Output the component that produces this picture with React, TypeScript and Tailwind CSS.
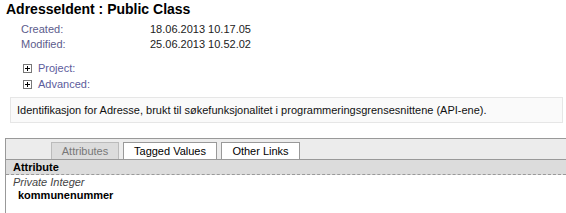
import React from 'react';

const PlusBox = () => (
  <span className="inline-flex items-center justify-center w-[9px] h-[9px] border border-[#777] bg-white mr-[6px]">
    <svg width="7" height="7" viewBox="0 0 7 7">
      <path d="M1 3.5h5M3.5 1v5" stroke="#000" strokeWidth="1" shapeRendering="crispEdges" />
    </svg>
  </span>
);

const tabs = [
  { label: 'Attributes', active: true, w: 'w-[68px]' },
  { label: 'Tagged Values', active: false, w: 'w-[94px]' },
  { label: 'Other Links', active: false, w: 'w-[79px]' },
];

const App: React.FC = () => {
  return (
    <div className="w-[566px] h-[213px] bg-white overflow-hidden font-['Liberation_Sans',Arial,sans-serif] text-[#222]">
      <h1 className="pl-[6px] pt-[1px] text-[14px] font-bold leading-[17px] text-black">AdresseIdent : Public Class</h1>

      <div className="pl-[21px] pt-[4px] text-[11px] leading-[15px]">
        <div className="flex">
          <span className="w-[129px] text-[#5c5c8c]">Created:</span>
          <span>18.06.2013 10.17.05</span>
        </div>
        <div className="flex">
          <span className="w-[129px] text-[#5c5c8c]">Modified:</span>
          <span>25.06.2013 10.52.02</span>
        </div>
      </div>

      <div className="pl-[23px] pt-[8px] text-[11px] leading-[16px] text-[#5c5c9c]">
        <div className="flex items-center"><PlusBox />Project:</div>
        <div className="flex items-center"><PlusBox />Advanced:</div>
      </div>

      <div className="ml-[10px] mr-[3px] mt-[5px] h-[26px] border border-[#e6e6e6] bg-[#fafafa] pl-[6px] text-[11px] leading-[24px] text-[#111]">
        Identifikasjon for Adresse, brukt til søkefunksjonalitet i programmeringsgrensesnittene (API-ene).
      </div>

      <div className="ml-[5px] mt-[15px] border-l border-t border-[#999]">
        <div className="h-[21px] bg-[#ececec] border-b border-[#999] flex items-end pl-[45px] gap-[4px]">
          {tabs.map(t => (
            <div
              key={t.label}
              className={`h-[17px] ${t.w} text-center border border-b-0 text-[11px] leading-[16px] ${
                t.active ? 'bg-[#dcdcdc] border-[#bbb] text-[#777]' : 'bg-white border-[#999] text-black'
              }`}
            >
              {t.label}
            </div>
          ))}
        </div>
        <div className="h-[15px] bg-[#dcdcdc] border-b border-dashed border-[#999] pl-[7px] text-[11px] font-bold leading-[15px] text-black">
          Attribute
        </div>
        <div className="pl-[7px] pt-[1px] text-[11px] leading-[13px]">
          <div className="italic text-[#444]">Private Integer</div>
          <div className="pl-[5px] font-bold text-black">kommunenummer</div>
        </div>
        <div className="h-[20px]" />
      </div>
    </div>
  );
};

export default App;
